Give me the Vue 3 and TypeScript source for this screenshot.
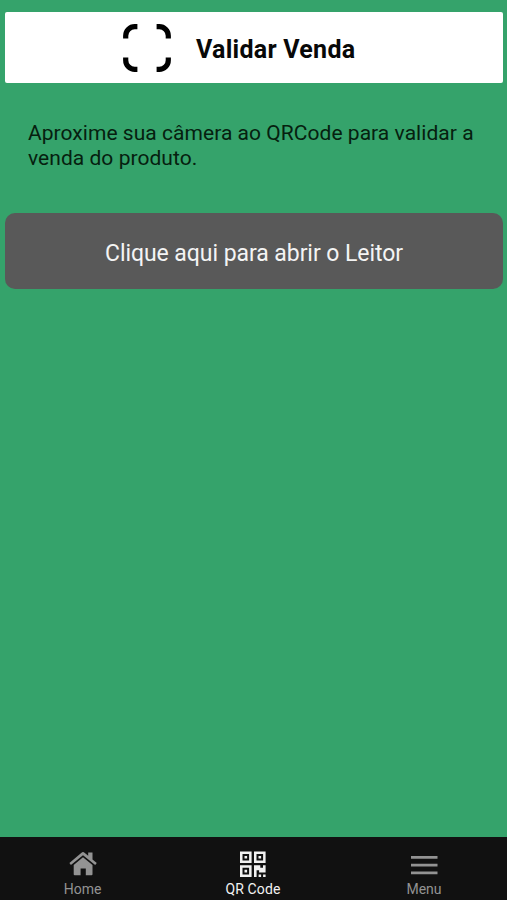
<script setup lang="ts">
import { ref } from 'vue'

type TabId = 'home' | 'qr' | 'menu'

interface Tab {
  id: TabId
  label: string
}

const tabs: Tab[] = [
  { id: 'home', label: 'Home' },
  { id: 'qr', label: 'QR Code' },
  { id: 'menu', label: 'Menu' },
]

const active = ref<TabId>('qr')
</script>

<template>
  <div class="screen">
    <main class="content">
      <header class="title-card">
        <svg class="scan-icon" viewBox="0 0 48 48" aria-hidden="true">
          <path d="M2.7 14.4V11.7a9 9 0 0 1 9-9h2.7M33.6 2.7h2.7a9 9 0 0 1 9 9v2.7M45.3 33.6v2.7a9 9 0 0 1-9 9h-2.7M14.4 45.3h-2.7a9 9 0 0 1-9-9v-2.7" />
        </svg>
        <h1 class="title">Validar Venda</h1>
      </header>
      <p class="hint">Aproxime sua câmera ao QRCode para validar a venda do produto.</p>
      <button class="open-reader" type="button">Clique aqui para abrir o Leitor</button>
    </main>

    <nav class="tab-bar">
      <button
        v-for="tab in tabs"
        :key="tab.id"
        type="button"
        class="tab"
        :class="[tab.id, { active: tab.id === active }]"
        @click="active = tab.id"
      >
        <svg v-if="tab.id === 'home'" class="tab-icon" viewBox="0 0 28 28" aria-hidden="true">
          <path d="M14 7.200 23.500 15v9.300a1 1 0 0 1-1 1h-5.700v-6.800h-5.200v6.800H5.700a1 1 0 0 1-1-1V15z" />
          <path d="M14 2.100c.6 0 1 .2 1.500.6l3.700 3.100V2.500h4.300v6.900l4.300 3.700-1.600 1.900L14 5.300 1.900 15 .4 13.100 12.500 2.700c.5-.4.900-.6 1.500-.6z" />
        </svg>
        <svg v-else-if="tab.id === 'qr'" class="tab-icon" viewBox="0 0 28 28" aria-hidden="true">
          <path fill-rule="evenodd" d="M1 1.500h11.600v11.600H1zM3.500 4v6.600h6.600V4zM15 1.500h11.600v11.600H15zM17.500 4v6.600h6.600V4zM1 15.300h11.600v11.600H1zM3.500 17.800v6.600h6.600v-6.600z" />
          <path d="M5.500 6h2.600v2.600H5.500zM19.500 6h2.600v2.600h-2.600zM5.500 19.800h2.600v2.600H5.500zM15 15.300h6.300v2.500h2.700v-2.500h2.600v7.300h-6.500v-2.400h-2.500v6.700H15zM19.600 24.500h2.500v2.400h-2.500zM24.100 24.500h2.500v2.400h-2.500z" />
        </svg>
        <svg v-else class="tab-icon" viewBox="0 0 28 28" aria-hidden="true">
          <path d="M1 5.900h26.500v2.800H1zM1 13.700h26.500v2.800H1zM1 21.500h26.500v2.800H1z" />
        </svg>
        <span class="tab-label">{{ tab.label }}</span>
      </button>
    </nav>
  </div>
</template>

<style>
body {
  margin: 0;
}
</style>

<style scoped>
.screen {
  display: flex;
  flex-direction: column;
  height: 900px;
  background: #35a36b;
  font-family: Roboto, 'Liberation Sans', sans-serif;
}

.content {
  flex: 1;
  padding: 12px 4px 0 5px;
}

.title-card {
  display: flex;
  align-items: center;
  box-sizing: border-box;
  height: 71px;
  padding-left: 118px;
  background: #fff;
  border-radius: 2px;
}

.scan-icon {
  width: 48px;
  height: 48px;
  fill: none;
  stroke: #000;
  stroke-width: 5.2;
}

.title {
  margin: 4px 0 0 25px;
  color: #080808;
  font-size: 25px;
  font-weight: 700;
  line-height: 30px;
  letter-spacing: 0.26px;
  white-space: nowrap;
}

.hint {
  margin: 38px 20px 0 23px;
  color: #06200f;
  font-size: 21px;
  line-height: 25px;
  letter-spacing: 0.04px;
}

.open-reader {
  display: flex;
  align-items: center;
  justify-content: center;
  width: 100%;
  height: 76px;
  margin-top: 42px;
  padding: 4px 0 0;
  border: 0;
  border-radius: 10px;
  background: #595959;
  color: #f4f4f4;
  font-family: inherit;
  font-size: 23px;
  letter-spacing: -0.06px;
}

.tab-bar {
  display: grid;
  grid-template-columns: 165px 176px 166px;
  height: 63px;
  background: #111;
}

.tab {
  display: flex;
  flex-direction: column;
  align-items: center;
  padding: 13px 0 0;
  border: 0;
  background: none;
  color: #939393;
  font-family: inherit;
}

.tab.active {
  color: #f2f2f2;
}

.tab-icon {
  width: 28px;
  height: 28px;
  fill: currentColor;
}

.tab-label {
  margin-top: 3px;
  font-size: 14px;
  line-height: 17px;
}

.tab.active .tab-label {
  letter-spacing: 0.1px;
}
</style>
